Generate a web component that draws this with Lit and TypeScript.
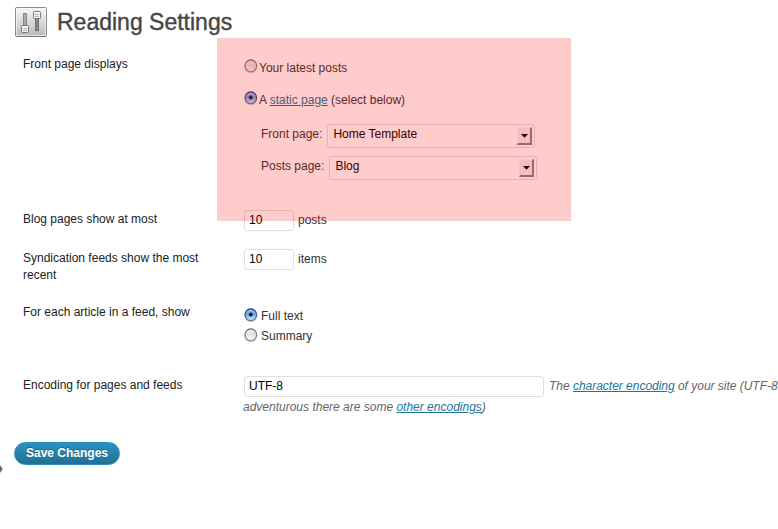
import { LitElement, html, css, svg } from "lit";
import { customElement, property } from "lit/decorators.js";

@customElement("aqua-radio")
class AquaRadio extends LitElement {
  @property({ type: Boolean }) checked = false;

  static styles = css`
    :host { display: block; width: 14px; height: 15px; flex: none; }
    svg { display: block; }
  `;

  render() {
    return html`<svg width="14" height="15" viewBox="0 0 14 15">
      <defs>
        <linearGradient id="off" x1="0" y1="0" x2="0" y2="1">
          <stop offset="0" stop-color="#f4f4f4" />
          <stop offset=".45" stop-color="#e0e0e0" />
          <stop offset="1" stop-color="#ffffff" />
        </linearGradient>
        <linearGradient id="on" x1="0" y1="0" x2="0" y2="1">
          <stop offset="0" stop-color="#b4cdf2" />
          <stop offset=".45" stop-color="#69a5e6" />
          <stop offset="1" stop-color="#c9f2ff" />
        </linearGradient>
        <linearGradient id="rim" x1="0" y1="0" x2="0" y2="1">
          <stop offset="0" stop-color="#25258c" />
          <stop offset="1" stop-color="#54759a" />
        </linearGradient>
        <linearGradient id="rimOff" x1="0" y1="0" x2="0" y2="1">
          <stop offset="0" stop-color="#666" />
          <stop offset="1" stop-color="#8c8c8c" />
        </linearGradient>
      </defs>
      <circle cx="6.8" cy="7.6" r="6.6" fill="#000" opacity=".2" />
      <circle cx="6.8" cy="6.7" r="5.8" fill=${this.checked ? "url(#on)" : "url(#off)"}
        stroke=${this.checked ? "url(#rim)" : "url(#rimOff)"} stroke-width="1.1" />
      ${this.checked ? svg`<circle cx="6.8" cy="6.6" r="2" fill="#14213f" />` : null}
    </svg>`;
  }
}

@customElement("classic-select")
class ClassicSelect extends LitElement {
  @property() value = "";

  static styles = css`
    :host {
      display: flex; box-sizing: border-box; width: 208px; height: 24px;
      border: 1px solid #dfdfdf; border-radius: 3px; background: #fff;
      padding: 2px 2px 2px 5px; justify-content: space-between;
      color: #000; line-height: 15px;
    }
    .arrow {
      box-sizing: border-box; width: 15px; height: 18px; background: #efefef;
      border: solid; border-width: 1px 2px 2px 1px;
      border-color: #f8f8f8 #848484 #848484 #f8f8f8;
    }
    svg { display: block; }
  `;

  render() {
    return html`<span>${this.value}</span>
      <span class="arrow"><svg width="12" height="15" viewBox="0 0 12 15">
        <path d="M3 6h7L6.5 9.8Z" fill="#000" />
      </svg></span>`;
  }
}

@customElement("app-root")
class AppRoot extends LitElement {
  static styles = css`
    :host {
      display: block; position: relative; width: 778px; height: 529px;
      overflow: hidden; background: #fff; color: #333;
      font: 12px/17px "Liberation Sans", Arial, sans-serif;
    }
    header { display: flex; height: 55px; padding-left: 15px; box-sizing: border-box; }
    .icon { margin-top: 6px; flex: none; }
    h1 {
      margin: 8px 0 0 9px; font-size: 23px; line-height: 29px; font-weight: 400;
      color: #464646; white-space: nowrap; -webkit-text-stroke: .4px #464646;
    }
    .form {
      display: grid; grid-template-columns: 221px 1fr;
      grid-template-rows: 155px 39px 54px 73px 66px; padding-left: 23px;
      white-space: nowrap;
    }
    .label { color: #222; width: 190px; white-space: normal; padding-top: 1px; }
    .choice { display: flex; height: 32px; }
    .choice span { padding: 5px 0 0 1px; }
    .front .choice aqua-radio { margin-top: 4px; }
    .pick { display: flex; height: 32px; padding-left: 17px; gap: 5px; }
    .pick > span { padding-top: 2px; }
    .selects { padding-top: 5px; }
    .line { display: flex; gap: 4px; }
    .line > span { padding-top: 2px; }
    .field {
      box-sizing: border-box; height: 21px; width: 50px; border: 1px solid #dfdfdf;
      border-radius: 3px; padding-left: 4px; color: #000; line-height: 19px; flex: none;
    }
    .wide { width: 300px; margin-right: 1px; }
    .feed { padding-top: 5px; }
    .feed .choice { height: 20px; gap: 3px; }
    .feed .choice span { padding: 0; }
    a { color: #21759b; text-decoration: underline; }
    em { color: #666; }
    .note { letter-spacing: -.02px; }
    .rest { display: block; margin: 2px 0 0 -1px; }
    .save {
      box-sizing: border-box; margin-left: 14px; width: 106px; height: 23px;
      border: 1px solid #298cba; border-radius: 12px; padding: 0 0 1px;
      background: linear-gradient(#2a93c2, #226e93); color: #fff; display: block;
      font: bold 12px/20px "Liberation Sans", Arial, sans-serif;
      text-shadow: 0 -1px 0 rgba(0, 0, 0, .3);
    }
    .highlight {
      position: absolute; left: 217px; top: 38px; width: 354px; height: 183px;
      background: rgba(255, 0, 0, .2); pointer-events: none;
    }
    .fold { position: absolute; left: 0; top: 464px; }
  `;

  render() {
    return html`
      <header>
        <svg class="icon" width="33" height="33" viewBox="0 0 33 33">
          <defs>
            <linearGradient id="plate" x1="0" y1="0" x2="0" y2="1">
              <stop offset="0" stop-color="#f8f8f8" />
              <stop offset="1" stop-color="#bababa" />
            </linearGradient>
          </defs>
          <rect x=".5" y="1.5" width="31" height="29" rx="1" fill="url(#plate)" stroke="#8c8c8c" />
          <rect x="1.5" y="2.5" width="29" height="27" fill="none" stroke="#f6f6f6" stroke-opacity=".7" />
          <path d="M1 30.5h30" stroke="#777" />
          <rect x="8.5" y="7.5" width="3" height="14" fill="#aaa" stroke="#858585" />
          <rect x="20.5" y="9.5" width="3" height="15" fill="#8b8b8b" stroke="#707070" />
          <rect x="6.5" y="19.5" width="7" height="7" rx="1" fill="#f4f4f4" stroke="#777" />
          <rect x="18.5" y="5.5" width="7" height="7" rx="1" fill="#f4f4f4" stroke="#777" />
          <path d="M8 22.5h4M8 24.5h4M20 8.5h4M20 10.5h4" stroke="#b4b4b4" />
        </svg>
        <h1>Reading Settings</h1>
      </header>
      <div class="form">
        <div class="label">Front page displays</div>
        <div class="front">
          <div class="choice"><aqua-radio></aqua-radio><span>Your latest posts</span></div>
          <div class="choice"><aqua-radio checked></aqua-radio><span>A <a>static page</a> (select below)</span></div>
          <div class="selects">
            <div class="pick"><span>Front page:</span><classic-select value="Home Template"></classic-select></div>
            <div class="pick"><span>Posts page:</span><classic-select value="Blog"></classic-select></div>
          </div>
        </div>
        <div class="label">Blog pages show at most</div>
        <div class="line"><div class="field">10</div><span>posts</span></div>
        <div class="label">Syndication feeds show the most recent</div>
        <div class="line"><div class="field">10</div><span>items</span></div>
        <div class="label">For each article in a feed, show</div>
        <div class="feed">
          <div class="choice"><aqua-radio checked></aqua-radio><span>Full text</span></div>
          <div class="choice"><aqua-radio></aqua-radio><span>Summary</span></div>
        </div>
        <div class="label">Encoding for pages and feeds</div>
        <div>
          <div class="line"><div class="field wide">UTF-8</div><span><em class="note">The <a>character encoding</a> of your site (UTF-8</em></span></div>
          <em class="rest">adventurous there are some <a>other encodings</a>)</em>
        </div>
      </div>
      <button class="save">Save Changes</button>
      <svg class="fold" width="3" height="10" viewBox="0 0 3 10"><path d="M0 1l2.6 4L0 9Z" fill="#666" /></svg>
      <div class="highlight"></div>
    `;
  }
}
